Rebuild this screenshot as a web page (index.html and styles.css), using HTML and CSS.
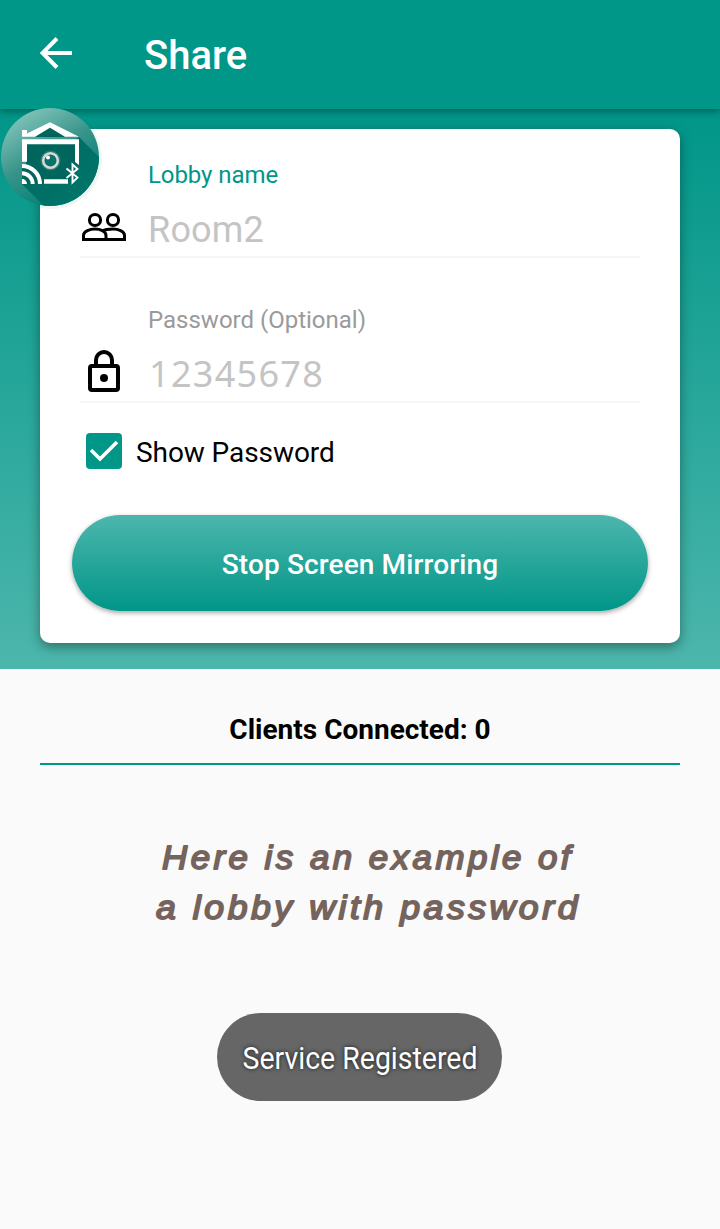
FILE: index.html
```html
<!DOCTYPE html>
<html lang="en">
<head>
<meta charset="utf-8">
<title>Share</title>
<link rel="stylesheet" href="styles.css">
</head>
<body>
<header class="appbar">
  <svg class="back" width="32" height="32" viewBox="0 0 32 32"><path d="M17 1.500 2.500 16 17 30.500M2.500 16H32" fill="none" stroke="#fff" stroke-width="4"/></svg>
  <h1 class="title">Share</h1>
</header>
<main>
  <section class="panel">
    <div class="card">
      <div class="field">
        <label class="label active">Lobby name</label>
        <div class="row">
          <svg class="icon people" width="48" height="40" viewBox="0 0 48 40"><g fill="none" stroke="#000" stroke-width="3"><circle cx="15" cy="13" r="5.600"/><circle cx="33" cy="13" r="5.600"/><path d="M3.500 32.500v-4c0-4.300 6.500-6.500 11.500-6.500s11 2.200 11 6.500v4zM22.500 24c2-1.300 6-2 10.500-2 5 0 11.500 2.200 11.500 6.500v4H25"/></g></svg>
          <span class="value">Room2</span>
        </div>
      </div>
      <div class="field second">
        <label class="label">Password (Optional)</label>
        <div class="row">
          <svg class="icon lock" width="48" height="48" viewBox="0 0 48 48"><rect x="10" y="18" width="28" height="24" rx="2" fill="none" stroke="#000" stroke-width="4"/><path d="M16 18v-6a8 8 0 0 1 16 0v6" fill="none" stroke="#000" stroke-width="4"/><circle cx="24" cy="30" r="4"/></svg>
          <span class="value code">12345678</span>
        </div>
      </div>
      <div class="check">
        <svg width="36" height="36" viewBox="0 0 36 36"><rect width="36" height="36" rx="4" fill="#009688"/><path d="m5 17 9 9L31 9" fill="none" stroke="#fff" stroke-width="3.600"/></svg>
        <span>Show Password</span>
      </div>
      <button class="stop">Stop Screen Mirroring</button>
    </div>
  </section>
  <section class="clients">
    <h2 class="count">Clients Connected: 0</h2>
    <svg class="caption" width="440" height="110" viewBox="0 0 440 110"><text x="22" y="39" textLength="412" lengthAdjust="spacingAndGlyphs">Here is an example of</text><text x="16" y="89" textLength="425" lengthAdjust="spacingAndGlyphs">a lobby with password</text></svg>
    <div class="toast"><span>Service Registered</span></div>
  </section>
</main>
<svg class="bubble" width="104" height="106" viewBox="0 0 104 106">
  <defs>
    <linearGradient id="disc" x1="0.200" y1="0.050" x2="0.700" y2="0.900"><stop offset="0" stop-color="#80c4ba"/><stop offset=".5" stop-color="#38948a"/><stop offset="1" stop-color="#007f73"/></linearGradient>
    <linearGradient id="shade" x1="0" y1="0" x2="1" y2="1"><stop offset="0" stop-color="#00665d"/><stop offset="1" stop-color="#007b70"/></linearGradient>
    <clipPath id="round"><circle cx="50" cy="51" r="49"/></clipPath>
    <clipPath id="overcard"><path d="M40 23h64v83H40z"/></clipPath>
  </defs>
  <circle cx="52" cy="53" r="50" fill="#e6f3f0" opacity=".7" clip-path="url(#overcard)"/>
  <circle cx="50" cy="51" r="49" fill="url(#disc)"/>
  <g clip-path="url(#round)"><path d="M22 78 79 31l30 30v50H55z" fill="url(#shade)"/></g>
  <path d="M26 37h50v38H68v3H22V58h4zM35 31l15-11 15 11z" fill="#00665d"/>
  <path fill-rule="evenodd" d="M22 24h5v3.500L50 16.300l29 14.400H22zM35 30.700h30L50 21.700z" fill="#fff"/>
  <path d="M22 33.300h57V59l-4-3V38.300H27v17.500h-5zM44 73.300h24v4.500H44z" fill="#fff"/>
  <g fill="none" stroke="#fff" stroke-width="4"><path d="M22 60a18 18 0 0 1 18 18M22 67.300A10.700 10.700 0 0 1 32.700 78"/></g>
  <path d="M22 73a5 5 0 0 1 5 5h-5z" fill="#fff"/>
  <circle cx="50.500" cy="54.500" r="10" fill="#368a80" opacity=".7"/>
  <circle cx="50.500" cy="54.500" r="7.300" fill="#087469" stroke="#d8d8d5" stroke-width="2.600"/>
  <circle cx="48" cy="51.500" r="2" fill="#fff"/>
  <path d="m66.500 62.500 11 9-5 5V58.500l5 4.500-11 9" fill="none" stroke="#fff" stroke-width="1.900"/>
</svg>
</body>
</html>
```
FILE: styles.css
```css
* { box-sizing: border-box; }
body {
  margin: 0;
  height: 1229px;
  overflow: hidden;
  position: relative;
  background: #fafafa;
  color: #000;
  font-family: Roboto, "Noto Sans", sans-serif;
}
h1, h2 { margin: 0; }
.appbar {
  position: relative;
  z-index: 1;
  display: flex;
  align-items: center;
  height: 109px;
  padding-left: 40px;
  background: #009688;
  box-shadow: 0 2px 8px rgba(0, 0, 0, .4);
}
.back { margin-bottom: 3px; }
.title {
  margin-left: 72px;
  padding-top: 3px;
  color: #fff;
  font-size: 40px;
  font-weight: 500;
  line-height: 48px;
}
.panel {
  height: 560px;
  padding: 20px 40px 26px;
  background: linear-gradient(#009688, #4db6ac);
}
.card {
  height: 514px;
  padding: 32px 32px 0;
  border-radius: 10px;
  background: #fff;
  box-shadow: 0 4px 12px rgba(0, 0, 0, .38);
}
.field {
  height: 97px;
  margin: 0 8px;
  border-bottom: 2px solid #f5f5f5;
}
.second { margin-top: 48px; }
.label {
  display: block;
  padding-left: 68px;
  color: #9a9a9a;
  font-size: 24px;
  line-height: 28px;
}
.active { color: #009688; letter-spacing: -.08px; }
.row {
  display: flex;
  align-items: center;
  gap: 20px;
  height: 60px;
  margin-top: 10px;
}
.people { margin-bottom: 4px; }
.lock { margin-bottom: 4px; }
.value {
  color: #c4c4c4;
  font-size: 36px;
  line-height: 42px;
  letter-spacing: .2px;
  margin-top: 2px;
}
.code {
  margin-top: 0;
  margin-left: 1px;
  font-family: "Noto Sans", sans-serif;
  letter-spacing: 1.300px;
}
.check {
  display: flex;
  align-items: center;
  gap: 14px;
  margin: 30px 14px 46px;
  height: 36px;
  font-size: 28px;
  letter-spacing: -.08px;
}
.check span { padding-top: 2px; }
.stop {
  display: block;
  width: 100%;
  height: 96px;
  padding: 3px 0 0;
  border: 0;
  border-radius: 48px;
  background: linear-gradient(#4db6ac, #009688);
  box-shadow: 0 2px 5px rgba(0, 0, 0, .35);
  color: #fff;
  font: 500 28px Roboto, sans-serif;
  letter-spacing: .13px;
}
.clients {
  display: flex;
  flex-direction: column;
  align-items: center;
  padding: 44px 40px 0;
}
.count {
  width: 100%;
  height: 52px;
  border-bottom: 2px solid #009688;
  font-size: 28px;
  font-weight: 700;
  line-height: 34px;
  text-align: center;
}
.caption { margin-top: 65px; overflow: visible; }
.caption text {
  fill: #75645e;
  stroke: #75645e;
  stroke-width: 1.800px;
  stroke-linejoin: round;
  font: italic 34px "Liberation Sans", Arial, sans-serif;
  letter-spacing: 3.400px;
}
.toast {
  display: flex;
  align-items: center;
  justify-content: center;
  width: 285px;
  height: 88px;
  margin-top: 73px;
  margin-right: 1px;
  border-radius: 44px;
  background: #666;
  color: #fff;
  font-size: 32px;
  white-space: nowrap;
  text-shadow: 0 0 5px rgba(0, 0, 0, .8);
}
.toast span { padding-top: 2px; transform: scaleX(.89); }
.bubble {
  position: absolute;
  z-index: 2;
  top: 106px;
  left: 0;
}
```
